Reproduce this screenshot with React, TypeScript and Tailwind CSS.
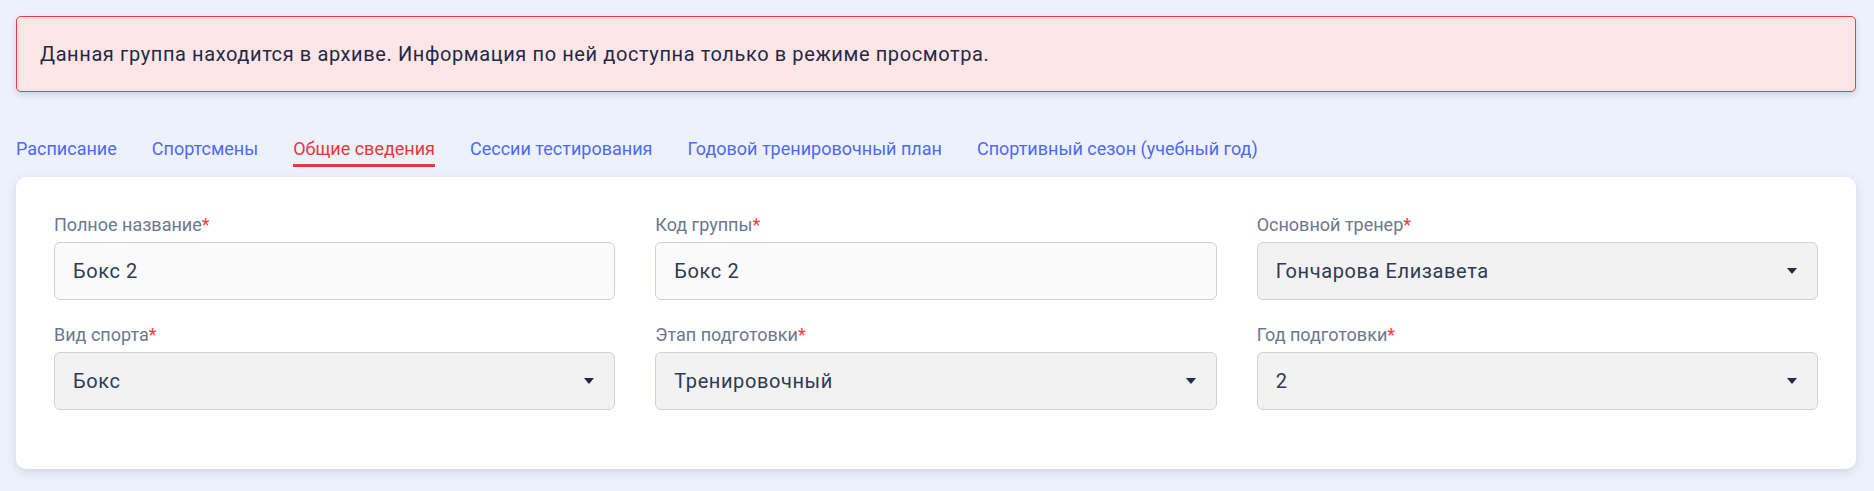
const tabs = [
  { label: "Расписание" },
  { label: "Спортсмены" },
  { label: "Общие сведения", active: true },
  { label: "Сессии тестирования" },
  { label: "Годовой тренировочный план" },
  { label: "Спортивный сезон (учебный год)" },
];

const fields = [
  { label: "Полное название", value: "Бокс 2", select: false },
  { label: "Код группы", value: "Бокс 2", select: false },
  { label: "Основной тренер", value: "Гончарова Елизавета", select: true },
  { label: "Вид спорта", value: "Бокс", select: true },
  { label: "Этап подготовки", value: "Тренировочный", select: true },
  { label: "Год подготовки", value: "2", select: true },
];

function Caret() {
  return (
    <svg width="10" height="6" viewBox="0 0 10 6" className="shrink-0">
      <path d="M0 0h10L5 6z" fill="#1e2a4a" />
    </svg>
  );
}

export default function App() {
  return (
    <main className="min-h-screen bg-[#edf1fc] pl-4 pr-[18px] pt-4 font-['Roboto',sans-serif]">
      {/* Archive notice */}
      <div className="rounded-[5px] border border-[#ef3b3b] bg-[#ffe6e6] px-[23px] py-[22px] shadow-[0_3px_6px_rgba(120,130,160,0.25)]">
        <p className="text-[20px] leading-[30px] tracking-[0.6px] text-[#1e2a4a]">
          Данная группа находится в архиве. Информация по ней доступна только в режиме просмотра.
        </p>
      </div>

      {/* Tabs */}
      <nav className="mt-[45px] flex gap-[35px]">
        {tabs.map((t) => (
          <button
            key={t.label}
            className={
              t.active
                ? "border-b-[3px] border-[#e8363a] pb-[3px] text-[18px] leading-6 text-[#e8363a]"
                : "border-b-[3px] border-transparent pb-[3px] text-[18px] leading-6 text-[#4d6af5]"
            }
          >
            {t.label}
          </button>
        ))}
      </nav>

      {/* Form card */}
      <section className="mt-[10px] rounded-[10px] bg-white px-[38px] pb-[59px] pt-9 shadow-[0_3px_8px_rgba(120,130,160,0.25)]">
        <div className="grid grid-cols-3 gap-x-10 gap-y-[23px]">
          {fields.map((f) => (
            <div key={f.label}>
              <div className="mb-[5px] text-[18px] leading-6 text-[#6b7890]">
                {f.label}
                <span className="text-[#ef3b3b]">*</span>
              </div>
              <div
                className={
                  f.select
                    ? "flex h-[58px] items-center justify-between rounded-md border border-[#cdd1d9] bg-[#f2f2f2] pl-[18px] pr-5"
                    : "flex h-[58px] items-center justify-between rounded-md border border-[#cdd1d9] bg-[#fafafa] pl-[18px] pr-5"
                }
              >
                <span className="text-[20px] tracking-[0.6px] text-[#2f3a55]">{f.value}</span>
                {f.select && <Caret />}
              </div>
            </div>
          ))}
        </div>
      </section>
    </main>
  );
}
